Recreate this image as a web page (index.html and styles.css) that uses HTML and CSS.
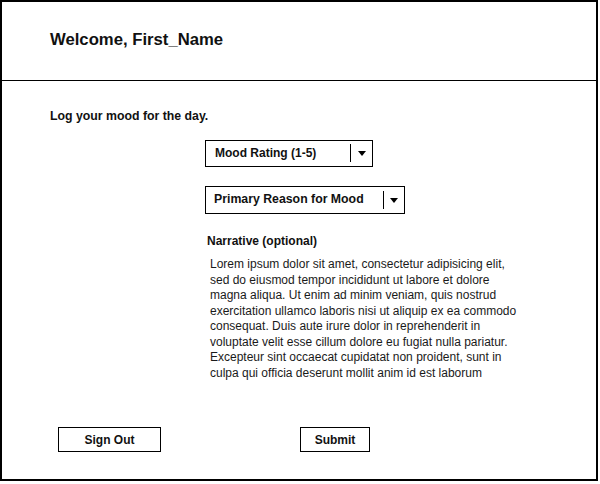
FILE: index.html
```html
<!DOCTYPE html>
<html>
<head>
<meta charset="utf-8">
<link rel="stylesheet" href="styles.css">
</head>
<body>
<div class="frame">
  <header class="header">
    <h1 class="title">Welcome, First_Name</h1>
  </header>
  <main class="main">
    <p class="intro">Log your mood for the day.</p>
    <div class="form">
      <div class="select select-mood">
        <span class="select-label">Mood Rating (1-5)</span>
        <span class="select-btn"><span class="arrow"></span></span>
      </div>
      <div class="select select-reason">
        <span class="select-label">Primary Reason for Mood</span>
        <span class="select-btn"><span class="arrow"></span></span>
      </div>
      <div class="narrative">
        <div class="narrative-label">Narrative (optional)</div>
        <p class="narrative-text">Lorem ipsum dolor sit amet, consectetur adipisicing elit, sed do eiusmod tempor incididunt ut labore et dolore magna aliqua. Ut enim ad minim veniam, quis nostrud exercitation ullamco laboris nisi ut aliquip ex ea commodo consequat. Duis aute irure dolor in reprehenderit in voluptate velit esse cillum dolore eu fugiat nulla pariatur. Excepteur sint occaecat cupidatat non proident, sunt in culpa qui officia deserunt mollit anim id est laborum</p>
      </div>
    </div>
    <div class="actions">
      <button class="btn btn-signout">Sign Out</button>
      <button class="btn btn-submit">Submit</button>
    </div>
  </main>
</div>
</body>
</html>
```
FILE: styles.css
```css
* { box-sizing: border-box; }
html, body { margin: 0; padding: 0; background: #fff; }
body {
  font-family: "Liberation Sans", Arial, sans-serif;
  color: #111;
}
.frame {
  width: 598px;
  height: 481px;
  border: 2px solid #000;
  display: flex;
  flex-direction: column;
}
.header {
  height: 79px;
  border-bottom: 1px solid #000;
  display: flex;
  align-items: center;
  padding-left: 48px;
  flex: none;
}
.title {
  margin: 0;
  font-size: 16.7px;
  font-weight: bold;
  line-height: 20px;
  padding-bottom: 2px;
}
.main {
  flex: 1;
  display: flex;
  flex-direction: column;
}
.intro {
  margin: 28px 0 0 48px;
  font-size: 12.3px;
  font-weight: bold;
  line-height: 14px;
}
.form {
  margin-left: 203px;
  margin-top: 17px;
  display: flex;
  flex-direction: column;
  align-items: flex-start;
}
.select {
  display: flex;
  align-items: stretch;
  border: 1px solid #000;
  background: #fff;
}
.select-mood { width: 168px; height: 27px; }
.select-reason { width: 200px; height: 28px; margin-top: 19px; }
.select-label {
  flex: 1;
  font-size: 12px;
  font-weight: bold;
  line-height: 25px;
  padding-left: 9px;
}
.select-reason .select-label { padding-left: 8px; font-size: 12.3px; }
.select-btn {
  width: 21px;
  display: flex;
  align-items: center;
  justify-content: center;
  position: relative;
}
.select-btn::before {
  content: "";
  position: absolute;
  left: 0;
  top: 4px;
  bottom: 4px;
  border-left: 1px solid #000;
}
.select-mood .select-btn::before { top: 3px; bottom: 4px; left: -1px; }
.arrow {
  width: 0;
  height: 0;
  border-left: 4px solid transparent;
  border-right: 4px solid transparent;
  border-top: 5px solid #000;
  margin-left: 1px;
}
.narrative {
  margin-top: 20px;
  margin-left: 2px;
}
.narrative-label {
  font-size: 12px;
  font-weight: bold;
  line-height: 14px;
}
.narrative-text {
  margin: 9px 0 0 3px;
  width: 314px;
  font-size: 12px;
  line-height: 15.5px;
  color: #1a1a1a;
}
.actions {
  margin-top: auto;
  margin-bottom: 27px;
  padding-left: 56px;
  display: flex;
  gap: 139px;
}
.btn {
  height: 25px;
  border: 1px solid #000;
  background: #fff;
  font-family: "Liberation Sans", Arial, sans-serif;
  font-size: 12px;
  font-weight: bold;
  color: #111;
  padding: 0;
}
.btn-signout { width: 103px; }
.btn-submit { width: 70px; }
```
